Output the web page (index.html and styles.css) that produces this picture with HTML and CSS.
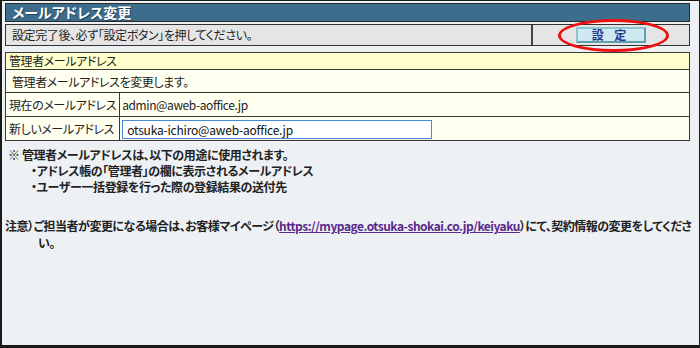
FILE: index.html
```html
<!DOCTYPE html>
<html lang="ja">
  <head>
    <meta charset="UTF-8" />
    <title>メールアドレス変更</title>
    <link rel="stylesheet" href="styles.css">
  </head>
  <body>
    <div class="frame">
      <h1 class="title">メールアドレス変更</h1>

      <div class="notice-bar">
        <div class="notice-text">設定完了後、必ず「設定ボタン」を押してください。</div>
        <div class="notice-action">
          <button class="btn-set">設 定</button>
          <span class="mark"></span>
        </div>
      </div>

      <table class="form-table">
        <tr>
          <th colspan="2" class="head">管理者メールアドレス</th>
        </tr>
        <tr>
          <td colspan="2" class="desc">管理者メールアドレスを変更します。</td>
        </tr>
        <tr>
          <td class="label">現在のメールアドレス</td>
          <td class="value">admin@aweb-aoffice.jp</td>
        </tr>
        <tr>
          <td class="label">新しいメールアドレス</td>
          <td class="value"><input type="text" class="mail-input" value="otsuka-ichiro@aweb-aoffice.jp" /></td>
        </tr>
      </table>

      <div class="usage">
        <p>※ 管理者メールアドレスは、以下の用途に使用されます。</p>
        <ul>
          <li>・アドレス帳の「管理者」の欄に表示されるメールアドレス</li>
          <li>・ユーザー一括登録を行った際の登録結果の送付先</li>
        </ul>
      </div>

      <p class="caution">注意）ご担当者が変更になる場合は、お客様マイページ（<a href="#">https://mypage.otsuka-shokai.co.jp/keiyaku</a>）にて、契約情報の変更をしてください。</p>
    </div>
  </body>
</html>
```

FILE: styles.css
```css
body {
  margin: 0;
  font-family: "Noto Sans CJK JP", "Liberation Sans", sans-serif;
  font-size: 12px;
  color: #222;
  letter-spacing: -0.4px;
  font-feature-settings: "palt";
}
.frame {
  box-sizing: border-box;
  height: 348px;
  background: #eef1f4;
  border: 1px solid #1a1a1a;
  border-left-width: 2px;
  border-bottom-width: 3px;
  padding: 2px 9px 0 3px;
}
.title {
  margin: 0;
  height: 17px;
  line-height: 17px;
  background: #3c6d8d;
  border: 1px solid #2b2b2b;
  color: #fff;
  font-size: 14px;
  font-weight: bold;
  letter-spacing: 0;
  padding-left: 6px;
  text-shadow: 1px 1px 0 #23445a;
}
.notice-bar {
  display: grid;
  grid-template-columns: 1fr 158px;
  margin-top: 2px;
  height: 22px;
  background: #e5e5e5;
  border: 1px solid #333;
  box-sizing: border-box;
}
.notice-text {
  line-height: 20px;
  padding-left: 6px;
}
.notice-action {
  position: relative;
  display: flex;
  justify-content: center;
  align-items: center;
  border-left: 2px solid #444;
}
.btn-set {
  width: 70px;
  height: 16px;
  padding: 0;
  background: #cfe9f2;
  border: 2px solid #5fa0ad;
  border-top-color: #8cc6d2;
  border-left-color: #8cc6d2;
  color: #1c3c8c;
  font-family: inherit;
  font-size: 12px;
  font-weight: bold;
  line-height: 12px;
  letter-spacing: 4px;
}
.mark {
  position: absolute;
  left: 25px;
  top: -6px;
  width: 105px;
  height: 27px;
  border: 3px solid #ee1111;
  border-radius: 50%;
}
.form-table {
  width: 100%;
  margin-top: 6px;
  border-collapse: collapse;
  background: #fffff0;
}
.form-table th,
.form-table td {
  border: 1px solid #3a3a3a;
  padding: 0 3px;
  text-align: left;
  font-weight: normal;
  white-space: nowrap;
}
.form-table .head {
  background: #ffffcc;
  height: 16px;
  line-height: 16px;
}
.form-table .desc {
  height: 22px;
  padding-left: 6px;
  border-bottom-color: #333;
}
.form-table .label {
  width: 106px;
  height: 23px;
  border-top-color: #555;
}
.form-table .value {
  padding-left: 2px;
  height: 23px;
  border-top-color: #aaa;
  border-left-color: #333;
}
.mail-input {
  box-sizing: border-box;
  width: 310px;
  height: 19px;
  margin: 2px 0 0 0;
  padding: 0 4px;
  border: 1px solid #4a8ad8;
  font-family: inherit;
  font-size: 12px;
  letter-spacing: -0.2px;
  color: #111;
}
.usage {
  margin-top: 6px;
  padding-left: 3px;
  font-weight: bold;
  line-height: 16px;
}
.usage p {
  margin: 0;
}
.usage ul {
  margin: 0;
  padding-left: 23px;
  list-style: none;
}
.caution {
  margin: 22px -7px 0 0;
  padding-left: 33px;
  text-indent: -33px;
  font-weight: bold;
  line-height: 17px;
  letter-spacing: -0.5px;
}
.caution a {
  color: #5a2a8a;
}
```
